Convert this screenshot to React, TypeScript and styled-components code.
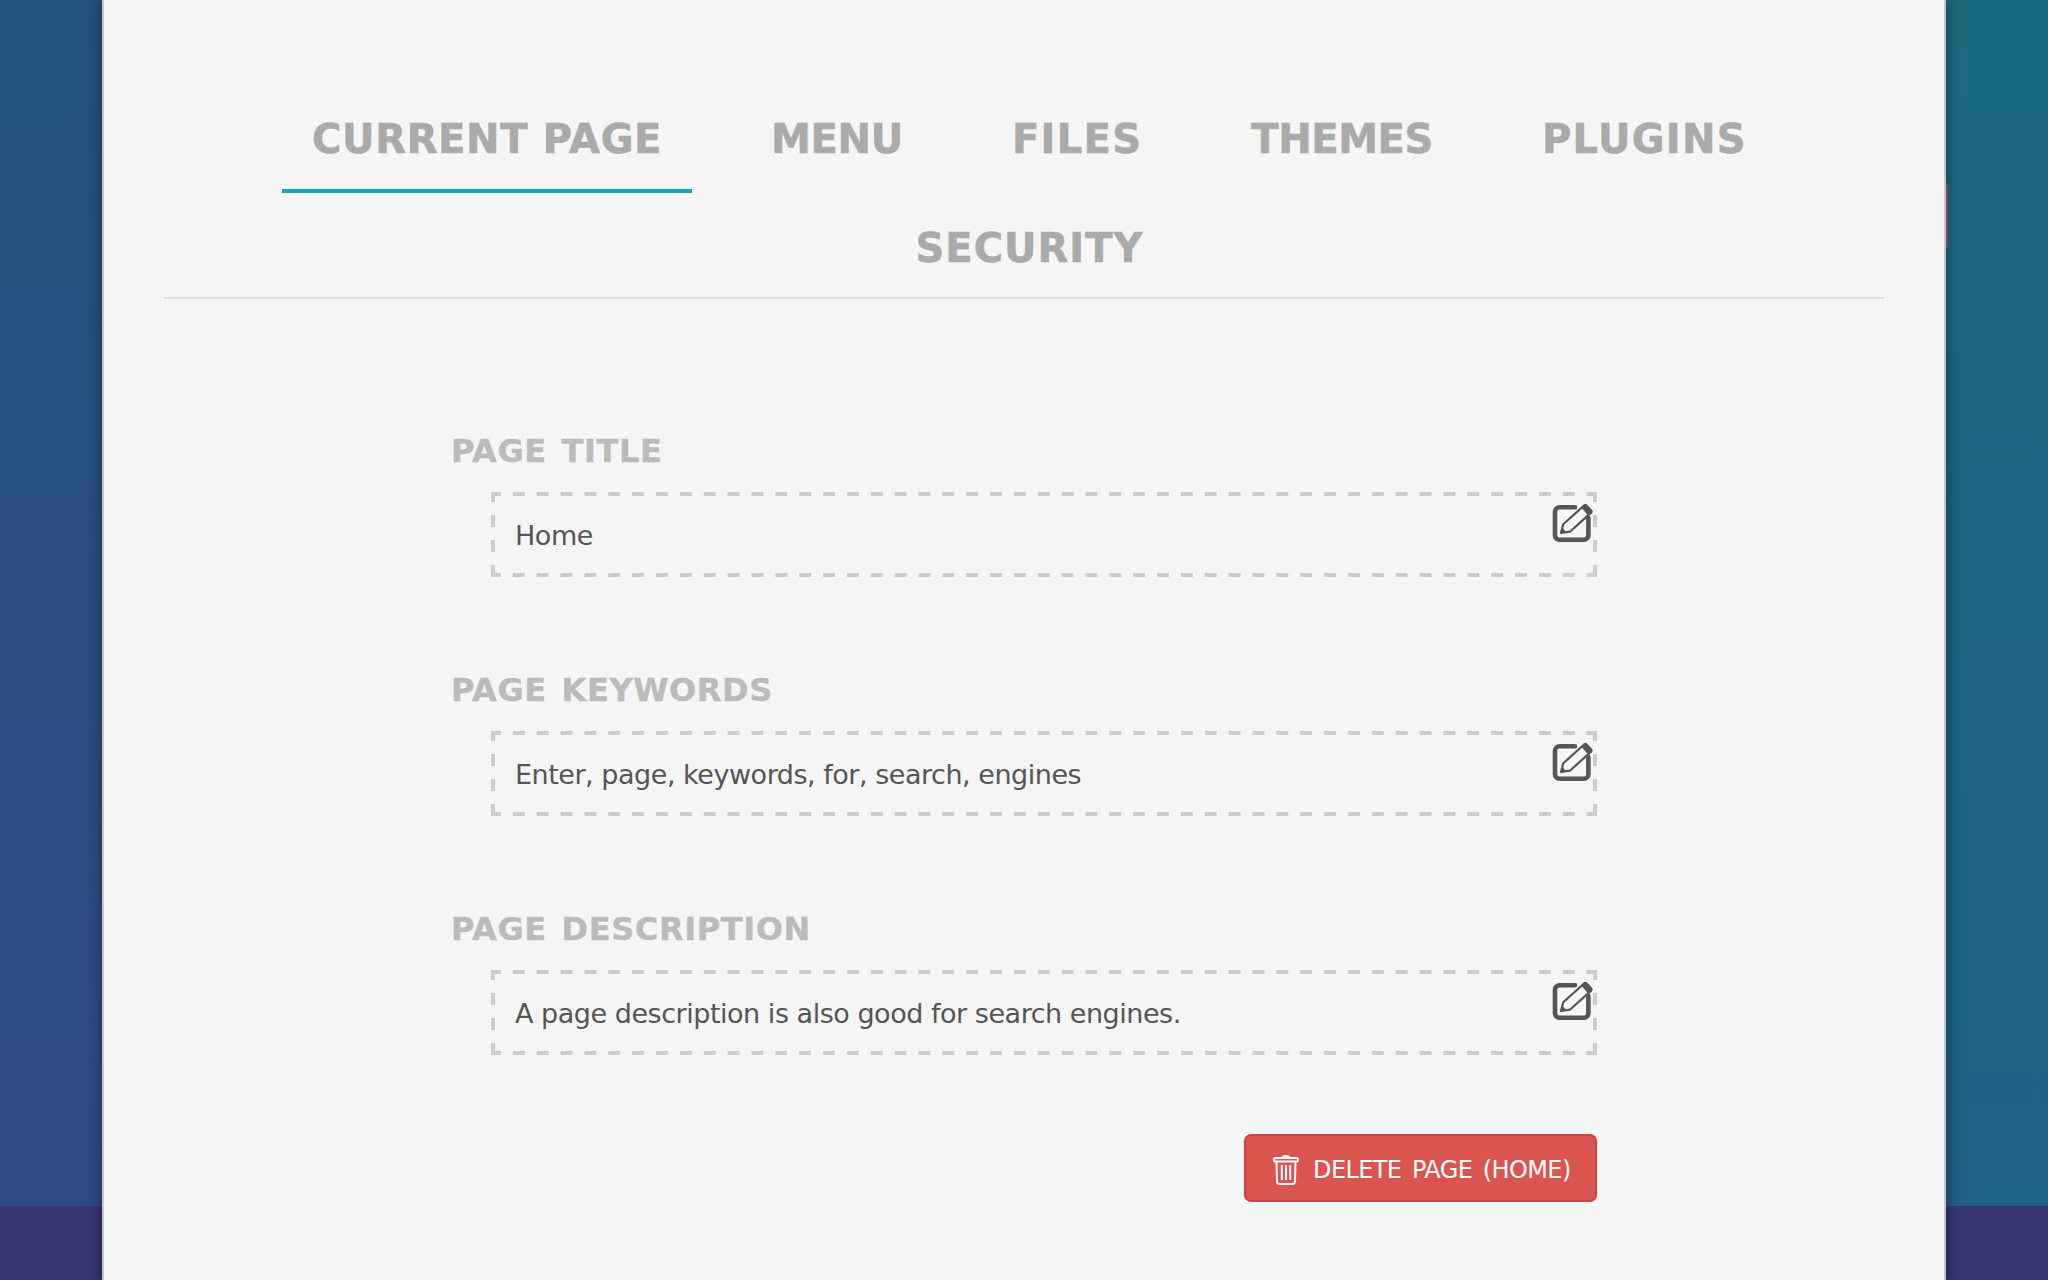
import styled, { createGlobalStyle } from 'styled-components';

const GlobalStyle = createGlobalStyle`
  html, body {
    margin: 0;
    padding: 0;
    height: 100%;
    overflow: hidden;
  }
  body {
    background: #35366f;
    font-family: "DejaVu Sans", Verdana, sans-serif;
  }
`;

const Page = styled.div`
  height: 1280px;
  overflow: hidden;
  display: flex;
  justify-content: center;
  background:
    linear-gradient(to bottom, transparent 1206px, #35366f 1206px),
    linear-gradient(to bottom, #26517c, #2f4a88) left top / 102px 100% no-repeat,
    linear-gradient(to bottom, #1b6a7c, #1f6184) right top / 102px 100% no-repeat;
`;

const Panel = styled.main`
  position: relative;
  box-sizing: border-box;
  width: 1844px;
  height: 1280px;
  padding: 115px 60px 0;
  background: #f5f5f5;
  border-left: 2px solid #c6c6c6;
  border-right: 2px solid #c6c6c6;
  box-shadow: 0 0 14px rgba(0, 0, 0, 0.45);
`;

const PeekingTab = styled.div`
  position: absolute;
  top: 183px;
  right: -4px;
  width: 2px;
  height: 65px;
  border-radius: 0 2px 2px 0;
  background: #7b4a55;
`;

const Tabs = styled.nav`
  display: flex;
  flex-wrap: wrap;
  justify-content: center;
  column-gap: 49px;
  row-gap: 36px;
  padding-left: 11px;
  border-bottom: 2px solid #dddddd;
`;

const Tab = styled.a<{ $active?: boolean; $track: number }>`
  box-sizing: border-box;
  height: 78px;
  margin-bottom: -5px;
  padding: 0 30px;
  font-size: 40px;
  font-weight: 700;
  line-height: 48px;
  letter-spacing: ${(p) => p.$track}px;
  -webkit-text-stroke: 0.6px #aaaaaa;
  color: #aaaaaa;
  white-space: nowrap;
  border-bottom: 4px solid ${(p) => (p.$active ? '#12a6b9' : 'transparent')};
`;

const Form = styled.section`
  display: flex;
  flex-direction: column;
  width: 1146px;
  margin: 133px 0 0 287px;
`;

const Field = styled.div`
  display: flex;
  flex-direction: column;
  gap: 22px;

  & + & {
    margin-top: 94px;
  }
`;

const Label = styled.label`
  font-size: 32px;
  font-weight: 700;
  line-height: 38px;
  letter-spacing: 0.6px;
  word-spacing: 3px;
  -webkit-text-stroke: 0.4px #bbbbbb;
  color: #bbbbbb;
`;

const EditBox = styled.div`
  position: relative;
  box-sizing: border-box;
  height: 85px;
  margin-left: 40px;
  padding: 2px 24px 0;
  display: flex;
  align-items: center;
  font-size: 27px;
  letter-spacing: -0.47px;
  color: #555555;
  background-image:
    linear-gradient(to right, #cccccc 50%, transparent 50%),
    linear-gradient(to right, #cccccc 50%, transparent 50%),
    linear-gradient(to bottom, #cccccc 50%, transparent 50%),
    linear-gradient(to bottom, #cccccc 50%, transparent 50%);
  background-size: 23.87px 4px, 23.87px 4px, 4px 25px, 4px 25px;
  background-position: -2px top, -2px bottom, left -2px, right -2px;
  background-repeat: repeat-x, repeat-x, repeat-y, repeat-y;
`;

const EditIcon = styled.svg`
  position: absolute;
  top: 8px;
  right: 3px;
  width: 42px;
  height: 42px;
`;

const Actions = styled.div`
  display: flex;
  justify-content: flex-end;
  margin-top: 79px;
`;

const DeleteButton = styled.button`
  box-sizing: border-box;
  width: 353px;
  height: 68px;
  display: flex;
  align-items: center;
  gap: 14px;
  padding: 3px 0 0 27px;
  font-family: inherit;
  font-size: 24px;
  letter-spacing: -0.6px;
  word-spacing: 3.5px;
  color: #ffffff;
  background: #da5450;
  border: 2px solid #d0413f;
  border-radius: 7px;
`;

const PencilSquare = () => (
  <EditIcon viewBox="0 0 42 42" fill="none">
    <path
      d="M23 7.3H7.5A4.5 4.5 0 0 0 3 11.8v23.4a4.5 4.5 0 0 0 4.5 4.5h24.4a4.5 4.5 0 0 0 4.5-4.5V18"
      stroke="#555555"
      strokeWidth="4.6"
      strokeLinecap="round"
    />
    <g transform="translate(9 33) rotate(-42)">
      <path
        d="M0 0L7.5 -5H36V5H7.5Z"
        fill="#f5f5f5"
        stroke="#555555"
        strokeWidth="2.2"
        strokeLinejoin="round"
      />
      <path d="M0 0L4.5 -3V3Z" fill="#555555" />
      <rect x="32" y="-5.8" width="6.5" height="11.6" rx="2" fill="#555555" />
    </g>
  </EditIcon>
);

const TrashIcon = () => (
  <svg width="26" height="31" viewBox="0 0 26 31" fill="none" stroke="#ffffff" strokeWidth="2">
    <rect x="1" y="4" width="24" height="3.6" rx="1.4" />
    <path d="M9.5 3.6c0-2 7-2 7 0" />
    <path d="M3.5 7.6l.5 20a2.6 2.6 0 0 0 2.6 2.4h12.8a2.6 2.6 0 0 0 2.6-2.4l.5-20" />
    <path d="M8.8 11v15M13 11v15M17.2 11v15" />
  </svg>
);

const tabs = [
  { name: 'CURRENT PAGE', track: 0.65 },
  { name: 'MENU', track: -0.3 },
  { name: 'FILES', track: 1.3 },
  { name: 'THEMES', track: -0.4 },
  { name: 'PLUGINS', track: 1.3 },
  { name: 'SECURITY', track: 1 },
];

const fields = [
  { label: 'PAGE TITLE', value: 'Home' },
  { label: 'PAGE KEYWORDS', value: 'Enter, page, keywords, for, search, engines' },
  { label: 'PAGE DESCRIPTION', value: 'A page description is also good for search engines.' },
];

export default function App() {
  return (
    <>
      <GlobalStyle />
      <Page>
        <Panel>
          <PeekingTab />
          <Tabs>
            {tabs.map((tab, i) => (
              <Tab key={tab.name} $active={i === 0} $track={tab.track}>
                {tab.name}
              </Tab>
            ))}
          </Tabs>
          <Form>
            {fields.map((field) => (
              <Field key={field.label}>
                <Label>{field.label}</Label>
                <EditBox>
                  {field.value}
                  <PencilSquare />
                </EditBox>
              </Field>
            ))}
            <Actions>
              <DeleteButton>
                <TrashIcon />
                DELETE PAGE (HOME)
              </DeleteButton>
            </Actions>
          </Form>
        </Panel>
      </Page>
    </>
  );
}
